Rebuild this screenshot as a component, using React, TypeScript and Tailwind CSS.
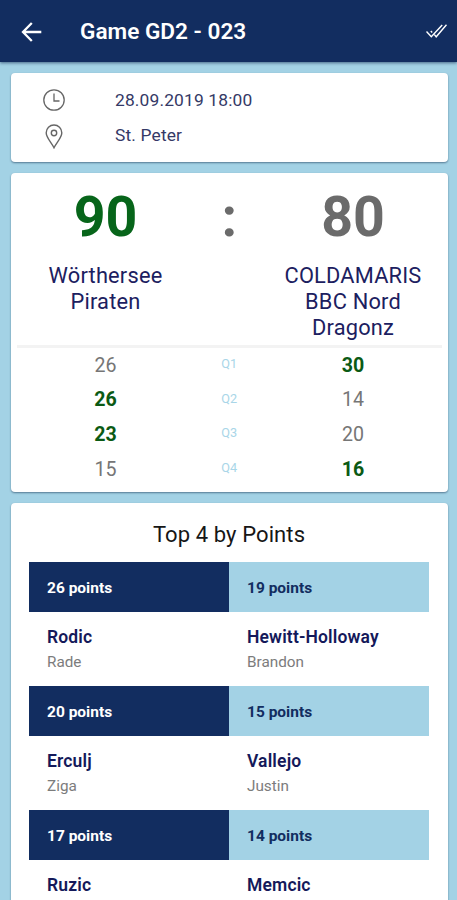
import React from 'react';
import clsx from 'clsx';

const quarters = [
  { label: 'Q1', home: 26, guest: 30 },
  { label: 'Q2', home: 26, guest: 14 },
  { label: 'Q3', home: 23, guest: 20 },
  { label: 'Q4', home: 15, guest: 16 },
];

const topScorers = [
  {
    home: { points: 26, last: 'Rodic', first: 'Rade' },
    guest: { points: 19, last: 'Hewitt-Holloway', first: 'Brandon' },
  },
  {
    home: { points: 20, last: 'Erculj', first: 'Ziga' },
    guest: { points: 15, last: 'Vallejo', first: 'Justin' },
  },
  {
    home: { points: 17, last: 'Ruzic', first: '' },
    guest: { points: 14, last: 'Memcic', first: '' },
  },
];

function Card({ className, children }: { className?: string; children: React.ReactNode }) {
  return (
    <section className={clsx('shrink-0 rounded-[4px] bg-white shadow-[0_1px_2px_rgba(20,50,80,0.55)]', className)}>
      {children}
    </section>
  );
}

function QuarterScore({ value, won }: { value: number; won: boolean }) {
  return (
    <span className={clsx('text-center text-[19.6px]', won ? 'font-bold text-[#0b5a14]' : 'text-[#767676]')}>
      {value}
    </span>
  );
}

function Player({ last, first }: { last: string; first: string }) {
  return (
    <div className="w-1/2 pl-[18px] pt-[12.8px]">
      <div className="text-[17.5px] font-semibold leading-6 tracking-[0.15px] text-[#14195a]">{last}</div>
      <div className="pt-px text-[15.3px] leading-6 text-[#7c7c7c]">{first}</div>
    </div>
  );
}

export default function App() {
  return (
    <div className="flex h-[900px] w-[457px] flex-col overflow-hidden bg-[#a3d2e5] font-[Roboto,sans-serif]">
      <header className="flex h-[62px] shrink-0 items-center bg-[#122d60] pl-[21px] pr-[10px] text-white shadow-[0_1px_3px_rgba(10,30,70,0.6)]">
        <svg className="mt-px h-[20px] w-[21px]" viewBox="0 0 21 20" fill="none" stroke="currentColor" strokeWidth="2.3">
          <path d="M20.3 10H2.3M10.8 1L2 10l8.8 9" />
        </svg>
        <h1 className="ml-[38px] flex-1 pt-[2px] text-[22.6px] font-semibold leading-[30px]">Game GD2 - 023</h1>
        <svg className="mt-px h-[15px] w-[21px]" viewBox="0 0 21 15" fill="none" stroke="currentColor" strokeWidth="1.4">
          <path d="M.5 7.5l4.8 5.3L16.2 1M4.8 7l1.4 1.5M8.4 10.6l1.8 2.2L20.5 .8" />
        </svg>
      </header>

      <main className="flex flex-col gap-[11px] pl-[11px] pr-[9.5px] pt-[11px]">
        {/* Date and venue */}
        <Card className="h-[89px] pl-[32px] pt-[9px] text-[17.4px] tracking-[0.15px] text-[#343966]">
          <div className="flex h-[36px] items-center">
            <svg className="h-[22px] w-[22px] text-[#666]" viewBox="0 0 22 22" fill="none" stroke="currentColor" strokeWidth="1.3">
              <circle cx="11" cy="11" r="10.2" />
              <path d="M11 4.5V12h5.5" />
            </svg>
            <span className="ml-[50px] pt-px">28.09.2019 18:00</span>
          </div>
          <div className="flex h-[36px] items-center">
            <svg className="h-[25px] w-[22px] text-[#666]" viewBox="0 0 22 25" fill="none" stroke="currentColor" strokeWidth="1.4">
              <path d="M11 23.8C8.5 18.5 3.2 13.8 3.2 8.8a7.8 7.8 0 0 1 15.6 0c0 5-5.3 9.7-7.8 15z" />
              <circle cx="11" cy="9" r="2.7" />
            </svg>
            <span className="ml-[50px] pb-px">St. Peter</span>
          </div>
        </Card>

        {/* Score */}
        <Card className="h-[319px] px-[6px] pt-[12px]">
          <div className="grid h-[160px] grid-cols-[177px_1fr_177px] text-center">
            <div>
              <div className="pt-px text-[55.5px] font-bold leading-[64px] text-[#07651a]">90</div>
              <div className="mx-auto mt-[12.5px] w-[140px] text-[21.8px] leading-[26.3px] tracking-[0.2px] text-[#1c2060]">Wörthersee Piraten</div>
            </div>
            <div className="pt-px text-[55.5px] font-bold leading-[64px] text-[#6b6b6b]">:</div>
            <div>
              <div className="pt-px text-[55.5px] font-bold leading-[64px] text-[#6b6b6b]">80</div>
              <div className="mx-auto mt-[12.5px] w-[150px] text-[21.8px] leading-[26.3px] tracking-[0.2px] text-[#1c2060]">COLDAMARIS BBC Nord Dragonz</div>
            </div>
          </div>
          <div className="h-[3px] bg-[#f3f3f3]" />
          {quarters.map((quarter) => (
            <div key={quarter.label} className="grid h-[34.7px] grid-cols-[177px_1fr_177px] items-center">
              <QuarterScore value={quarter.home} won={quarter.home > quarter.guest} />
              <span className="pb-[4px] text-center text-[12.7px] text-[#a9d6e8]">{quarter.label}</span>
              <QuarterScore value={quarter.guest} won={quarter.guest > quarter.home} />
            </div>
          ))}
        </Card>

        {/* Top scorers */}
        <Card className="h-[420px] pl-[18px] pr-[18.5px] pt-[16px]">
          <h2 className="h-[43.3px] pt-px text-center text-[22px] leading-[30px] tracking-[0.1px] text-[#161616]">Top 4 by Points</h2>
          {topScorers.map(({ home, guest }) => (
            <div key={home.last} className="h-[124.1px]">
              <div className="flex h-[49.5px] items-center text-[15.5px] font-bold">
                <div className="flex h-full w-1/2 items-center bg-[#122d60] pl-[18px] pt-[3px] text-white">{home.points} points</div>
                <div className="flex h-full w-1/2 items-center bg-[#a3d2e5] pl-[18px] pt-[3px] text-[#122d60]">{guest.points} points</div>
              </div>
              <div className="flex">
                <Player last={home.last} first={home.first} />
                <Player last={guest.last} first={guest.first} />
              </div>
            </div>
          ))}
        </Card>
      </main>
    </div>
  );
}
